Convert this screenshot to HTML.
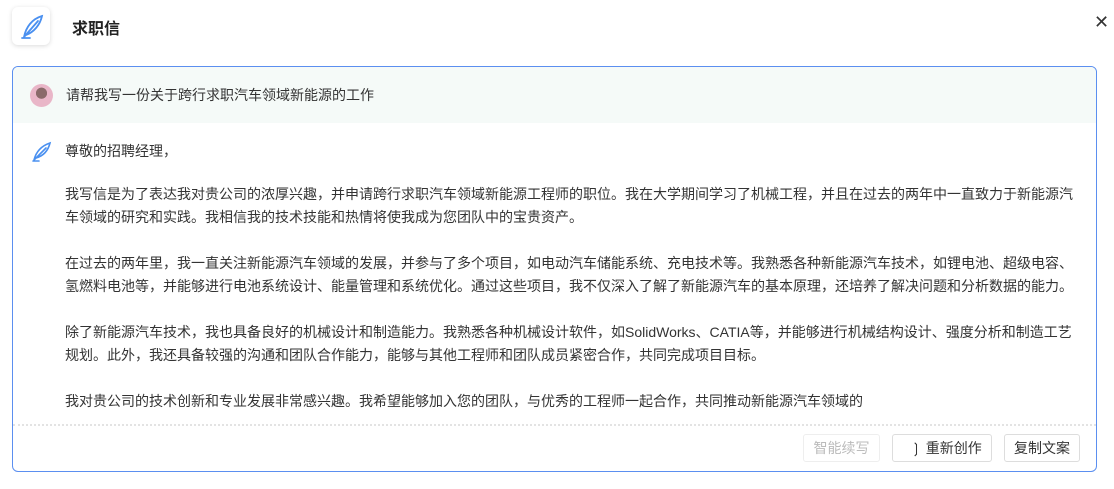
<!DOCTYPE html>
<html><head><meta charset="utf-8"><style>
body{margin:0;width:1114px;height:489px;background:#fff;font-family:"Liberation Sans","Noto Sans CJK SC",sans-serif;color:#333;position:relative;overflow:hidden}
.logo{position:absolute;left:12px;top:7px;width:38px;height:38px;border-radius:6px;background:#fff;box-shadow:0 1px 5px rgba(0,0,0,.15)}
.title{position:absolute;left:72px;top:15px;font-size:16px;font-weight:bold;color:#222}
.close{position:absolute;left:1094px;top:12px;font-size:18px;color:#333}
.box{position:absolute;left:12px;top:66px;width:1083px;height:404px;border:1px solid #5b8ff0;border-radius:6px;overflow:hidden}
.q{height:56px;background:#f5faf8;position:relative}
.av{position:absolute;left:17px;top:17px;width:23px;height:23px;border-radius:50%;background:radial-gradient(circle at 50% 40%,#8a6a6a 0 30%,#e9b6c8 32%)}
.q span{position:absolute;left:53px;top:18px;font-size:14px}
.ans{position:absolute;left:52px;top:73px;width:1020px;font-size:14px;line-height:23px}
.ans p{margin:0 0 23px}
.feather{position:absolute;left:17px;top:73px}
.div{position:absolute;left:0;right:0;top:357px;border-top:2px dotted #e3e3e3}
.btn{position:absolute;top:367px;height:26px;border:1px solid #ddd;border-radius:3px;font-size:14px;line-height:26px;text-align:center;background:#fff}
</style></head><body>
<div class="logo"><svg width="38" height="38" viewBox="0 0 38 38"><path d="M12 30 C14 20 20 12 30 9 C28 18 22 25 14 28 M12 30 L26 14 M10 31 H18" fill="none" stroke="#4a90f0" stroke-width="1.8" stroke-linecap="round"/></svg></div>
<div class="title">求职信</div>
<div class="close">✕</div>
<div class="box">
<div class="q"><div class="av"></div><span>请帮我写一份关于跨行求职汽车领域新能源的工作</span></div>
<svg class="feather" width="24" height="24" viewBox="0 0 24 24"><path d="M4 20 C6 12 11 6 20 3 C18 11 13 16 6 18 M4 20 L16 8 M3 21 H9" fill="none" stroke="#4a90f0" stroke-width="1.6" stroke-linecap="round"/></svg>
<div class="ans">
<p style="margin-bottom:20px">尊敬的招聘经理，</p>
<p>我写信是为了表达我对贵公司的浓厚兴趣，并申请跨行求职汽车领域新能源工程师的职位。我在大学期间学习了机械工程，并且在过去的两年中一直致力于新能源汽车领域的研究和实践。我相信我的技术技能和热情将使我成为您团队中的宝贵资产。</p>
<p>在过去的两年里，我一直关注新能源汽车领域的发展，并参与了多个项目，如电动汽车储能系统、充电技术等。我熟悉各种新能源汽车技术，如锂电池、超级电容、氢燃料电池等，并能够进行电池系统设计、能量管理和系统优化。通过这些项目，我不仅深入了解了新能源汽车的基本原理，还培养了解决问题和分析数据的能力。</p>
<p>除了新能源汽车技术，我也具备良好的机械设计和制造能力。我熟悉各种机械设计软件，如SolidWorks、CATIA等，并能够进行机械结构设计、强度分析和制造工艺规划。此外，我还具备较强的沟通和团队合作能力，能够与其他工程师和团队成员紧密合作，共同完成项目目标。</p>
<p>我对贵公司的技术创新和专业发展非常感兴趣。我希望能够加入您的团队，与优秀的工程师一起合作，共同推动新能源汽车领域的</p>
</div>
<div class="div"></div>
<div class="btn" style="left:790px;width:75px;color:#bbb;border-color:#eee">智能续写</div>
<div class="btn" style="left:879px;width:98px">&nbsp;&nbsp;❳ 重新创作</div>
<div class="btn" style="left:991px;width:74px">复制文案</div>
</div>
</body></html>
